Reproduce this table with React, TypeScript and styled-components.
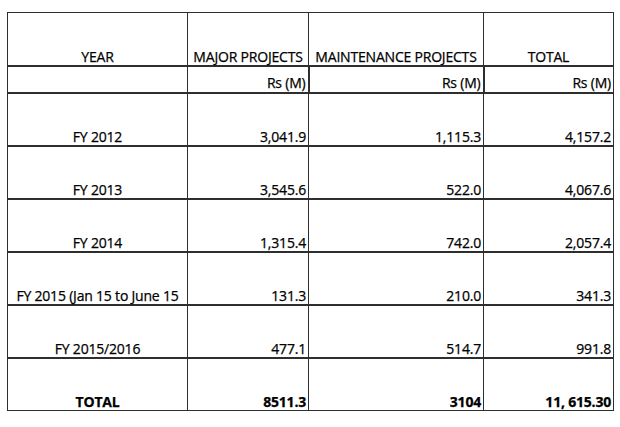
import * as React from 'react';
import styled, { createGlobalStyle } from 'styled-components';

const GlobalStyle = createGlobalStyle`
    html, body {
        margin: 0;
        padding: 0;
        background: #ffffff;
    }
    body {
        font-family: "Open Sans", "Liberation Sans", sans-serif;
        color: #000000;
    }
`;

interface Row {
    year: string;
    major: string;
    maintenance: string;
    total: string;
}

const rows: Row[] = [
    { year: 'FY 2012', major: '3,041.9', maintenance: '1,115.3', total: '4,157.2' },
    { year: 'FY 2013', major: '3,545.6', maintenance: '522.0', total: '4,067.6' },
    { year: 'FY 2014', major: '1,315.4', maintenance: '742.0', total: '2,057.4' },
    { year: 'FY 2015 (Jan 15 to June 15', major: '131.3', maintenance: '210.0', total: '341.3' },
    { year: 'FY 2015/2016', major: '477.1', maintenance: '514.7', total: '991.8' },
];

const Page = styled.div`
    padding: 12px 0 0 7px;
`;

const Table = styled.table`
    border-collapse: collapse;
    table-layout: fixed;
    width: 606px;
    font-size: 14px;
    letter-spacing: -0.2px;
    border: 1px solid #2e2e2e;
    -webkit-text-stroke: 0.25px #000;
`;

const Cell = styled.td<{ $align?: 'left' | 'center' | 'right'; $bold?: boolean; $height: number; $thick?: boolean }>`
    height: ${props => props.$height}px;
    padding: 0 2px 0 2px;
    vertical-align: bottom;
    text-align: ${props => props.$align || 'right'};
    font-weight: ${props => (props.$bold ? 700 : 400)};
    border-left: 1px solid #2e2e2e;
    border-right: 1px solid #2e2e2e;
    border-bottom: ${props => (props.$thick ? 2 : 1)}px solid #2e2e2e;
    white-space: nowrap;
    line-height: 16px;
`;

const UnitCell = styled(Cell)<{ $heavy?: boolean }>`
    border-left-width: ${props => (props.$heavy ? 2 : 1)}px;
    border-right-width: ${props => (props.$heavy ? 2 : 1)}px;
    padding-bottom: 1px;
`;

export default function App() {
    return (
        <Page>
            <GlobalStyle />
            <Table>
                <colgroup>
                    <col style={{ width: 180 }} />
                    <col style={{ width: 121 }} />
                    <col style={{ width: 175 }} />
                    <col style={{ width: 130 }} />
                </colgroup>
                <tbody>
                    <tr>
                        <Cell $align={'center'} $height={52} $thick={true}>YEAR</Cell>
                        <Cell $align={'center'} $height={52} $thick={true}>MAJOR PROJECTS</Cell>
                        <Cell $align={'center'} $height={52} $thick={true}>MAINTENANCE PROJECTS</Cell>
                        <Cell $align={'center'} $height={52} $thick={true}>TOTAL</Cell>
                    </tr>
                    <tr>
                        <UnitCell $height={24} $thick={true} />
                        <UnitCell $height={24} $thick={true}>Rs (M)</UnitCell>
                        <UnitCell $height={24} $thick={true} $heavy={true}>Rs (M)</UnitCell>
                        <UnitCell $height={24} $thick={true}>Rs (M)</UnitCell>
                    </tr>
                    {rows.map(row => (
                        <tr key={row.year}>
                            <Cell $align={'center'} $height={51} $thick={true}>{row.year}</Cell>
                            <Cell $height={51} $thick={true}>{row.major}</Cell>
                            <Cell $height={51} $thick={true}>{row.maintenance}</Cell>
                            <Cell $height={51} $thick={true}>{row.total}</Cell>
                        </tr>
                    ))}
                    <tr>
                        <Cell $align={'center'} $bold={true} $height={51}>TOTAL</Cell>
                        <Cell $bold={true} $height={51}>8511.3</Cell>
                        <Cell $bold={true} $height={51}>3104</Cell>
                        <Cell $bold={true} $height={51}>11, 615.30</Cell>
                    </tr>
                </tbody>
            </Table>
        </Page>
    );
}
